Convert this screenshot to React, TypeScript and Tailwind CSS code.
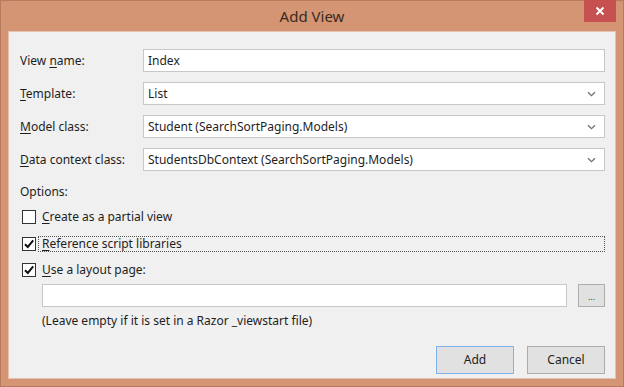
import React from "react";

const font = { fontFamily: '"Segoe UI", "Noto Sans", "Open Sans", sans-serif' };

function Chevron() {
  return (
    <svg width="9" height="6" viewBox="0 0 9 6" className="text-[#6d6d6d]">
      <path d="M1 1.2 L4.5 4.6 L8 1.2" fill="none" stroke="currentColor" strokeWidth="1.2" />
    </svg>
  );
}

function Field({ label, u, rest, value, select }: { label: string; u: string; rest: string; value: string; select?: boolean }) {
  return (
    <div className="flex h-[23px] items-center">
      <div className="w-[123px] shrink-0 text-[#1e1e1e]">
        {label}
        <span className="underline underline-offset-2">{u}</span>
        {rest}
      </div>
      <div className="flex h-[23px] flex-1 items-center border border-[#c7c7c7] bg-white pl-[4px] pr-[8px] text-[#1e1e1e]">
        <span className="flex-1">{value}</span>
        {select && <Chevron />}
      </div>
    </div>
  );
}

function Check({ checked }: { checked?: boolean }) {
  return (
    <div className="flex h-[14px] w-[14px] shrink-0 items-center justify-center border border-[#333333] bg-white">
      {checked && (
        <svg width="12" height="12" viewBox="0 0 12 12">
          <path d="M2 6.2 L4.8 9 L10.2 2.4" fill="none" stroke="#111" strokeWidth="2" />
        </svg>
      )}
    </div>
  );
}

export default function App() {
  return (
    <div
      className="flex h-[387px] w-[624px] flex-col border border-[#b77a5b] bg-[#d49574] text-[12px]"
      style={font}
    >
      <div className="relative flex h-[30px] shrink-0 items-center justify-center">
        <span className="text-[15px] text-[#3b2a20]">Add View</span>
        <div className="absolute right-[7px] top-[-1px] flex h-[22px] w-[32px] items-center justify-center bg-[#c75050]">
          <svg width="10" height="10" viewBox="0 0 10 10">
            <path d="M1.5 1.5 L8.5 8.5 M8.5 1.5 L1.5 8.5" stroke="white" strokeWidth="2" />
          </svg>
        </div>
      </div>
      <div className="mx-[7px] mb-[7px] flex flex-1 flex-col border border-[#e6c2ae] bg-[#f0f0f0] pl-[11px] pr-[10px] pt-[17px]">
        <div className="flex flex-col gap-[10px]">
          <Field label="View " u="n" rest="ame:" value="Index" />
          <Field label="" u="T" rest="emplate:" value="List" select />
          <Field label="" u="M" rest="odel class:" value="Student (SearchSortPaging.Models)" select />
          <Field label="" u="D" rest="ata context class:" value="StudentsDbContext (SearchSortPaging.Models)" select />
        </div>
        <div className="mt-[12px] text-[#1e1e1e]">Options:</div>
        <div className="mt-[8px] flex h-[16px] items-center">
          <div className="ml-[2px]"><Check /></div>
          <span className="ml-[6px] text-[#1e1e1e]">
            <span className="underline underline-offset-2">C</span>reate as a partial view
          </span>
        </div>
        <div className="mt-[11px] flex h-[16px] items-center">
          <div className="ml-[2px]"><Check checked /></div>
          <div className="ml-[2px] flex h-[16px] flex-1 items-center border border-dotted border-[#555] pl-[3px] text-[#1e1e1e]">
            <span className="underline underline-offset-2">R</span>eference script libraries
          </div>
        </div>
        <div className="mt-[10px] flex h-[16px] items-center">
          <div className="ml-[2px]"><Check checked /></div>
          <span className="ml-[6px] text-[#1e1e1e]">
            <span className="underline underline-offset-2">U</span>se a layout page:
          </span>
        </div>
        <div className="ml-[22px] mt-[6px] flex h-[23px] items-center gap-[11px]">
          <div className="h-[23px] flex-1 border border-[#c7c7c7] bg-white" />
          <div className="flex h-[23px] w-[27px] items-end justify-center border border-[#adadad] bg-[#e1e1e1] pb-[5px] text-[9px] leading-none text-[#444]">
            ...
          </div>
        </div>
        <div className="ml-[22px] mt-[5px] text-[#1e1e1e]">(Leave empty if it is set in a Razor _viewstart file)</div>
        <div className="mt-auto mb-[4px] flex justify-end gap-[13px]">
          <button className="h-[28px] w-[78px] border border-[#7eb4ea] bg-[#e1e1e1] text-[#1e1e1e]">Add</button>
          <button className="h-[28px] w-[78px] border border-[#adadad] bg-[#e1e1e1] text-[#1e1e1e]">Cancel</button>
        </div>
      </div>
    </div>
  );
}
